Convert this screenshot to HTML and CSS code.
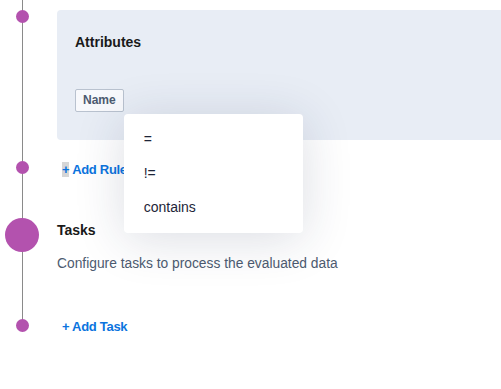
FILE: index.html
```html
<!DOCTYPE html>
<html>
<head>
    <meta charset="UTF-8"/>
    <title>Rule editor</title>
    <link rel="stylesheet" href="styles.css">
</head>
<body>
    <div class="timeline">
        <div class="step step-card">
            <div class="marker"><span class="dot"></span></div>
            <div class="card">
                <div class="card-title">Attributes</div>
                <div class="picker">
                    <button type="button" class="chip">Name</button>
                    <ul class="menu">
                        <li>=</li>
                        <li>!=</li>
                        <li>contains</li>
                    </ul>
                </div>
            </div>
        </div>
        <div class="step step-rule">
            <div class="marker"><span class="dot"></span></div>
            <a class="add-link" href="#"><span class="plus">+</span> Add Rule</a>
        </div>
        <div class="step step-tasks">
            <div class="marker"><span class="dot"></span></div>
            <div class="section">
                <div class="section-title">Tasks</div>
                <div class="section-desc">Configure tasks to process the evaluated data</div>
            </div>
        </div>
        <div class="step step-last">
            <div class="marker"><span class="dot"></span></div>
            <a class="add-link" href="#">+ Add Task</a>
        </div>
    </div>
</body>
</html>
```

FILE: styles.css
```css
body {
    margin: 0;
    overflow: hidden;
    background: #fff;
    font-family: "Liberation Sans", Arial, sans-serif;
    color: #1a1a1a;
}
.timeline {
    width: 501px;
}
.step {
    display: grid;
    grid-template-columns: 44px 1fr;
    column-gap: 13px;
    align-items: start;
}
.marker {
    align-self: stretch;
    display: flex;
    justify-content: center;
    align-items: flex-start;
    background: linear-gradient(#8a8a8a, #8a8a8a) center top / 1px 100% no-repeat;
}
.dot {
    display: block;
    width: 13px;
    height: 13px;
    border-radius: 50%;
    background: #b352ae;
}

/* attributes card */
.step-card .dot {
    margin-top: 10px;
}
.card {
    position: relative;
    margin-top: 10px;
    margin-right: -8px;
    height: 130px;
    box-sizing: border-box;
    padding: 22px 18px 0;
    background: #e8edf5;
    border-radius: 4px;
}
.card-title {
    font-size: 14px;
    line-height: 20px;
    font-weight: bold;
    margin-bottom: 37px;
}
.picker {
    position: relative;
    display: inline-block;
}
.chip {
    display: block;
    margin: 0;
    padding: 3px 7px;
    font-family: inherit;
    font-size: 12px;
    line-height: 15px;
    font-weight: bold;
    color: #4d5b70;
    background: #f8f9fc;
    border: 1px solid #b9c2cf;
    border-radius: 2px;
}
.menu {
    position: absolute;
    top: calc(100% + 2px);
    left: 100%;
    z-index: 2;
    width: 179px;
    margin: 0;
    padding: 9px 0 8px;
    list-style: none;
    background: #fff;
    border-radius: 4px;
    box-shadow: 0 6px 50px rgba(30, 45, 80, 0.16);
}
.menu li {
    padding: 8px 20px 9px;
    font-size: 14px;
    line-height: 17px;
    color: #1e2538;
}

/* links */
.add-link {
    justify-self: start;
    margin-left: 5px;
    font-size: 13px;
    line-height: 17px;
    font-weight: bold;
    letter-spacing: -0.3px;
    color: #0b74de;
    text-decoration: none;
}
.plus {
    background: #d6d6d6;
}
.step-rule .dot,
.step-rule .add-link {
    margin-top: 21px;
}

/* tasks */
.step-tasks .dot {
    width: 34px;
    height: 34px;
    margin-top: 40px;
}
.section {
    margin-top: 42px;
}
.section-title {
    font-size: 14px;
    line-height: 20px;
    font-weight: bold;
}
.section-desc {
    margin-top: 15px;
    font-size: 13.8px;
    line-height: 18px;
    color: #4d5b70;
}
.step-last .marker {
    background-size: 1px 52px;
}
.step-last .dot {
    margin-top: 46px;
}
.step-last .add-link {
    margin-top: 45px;
}
```
